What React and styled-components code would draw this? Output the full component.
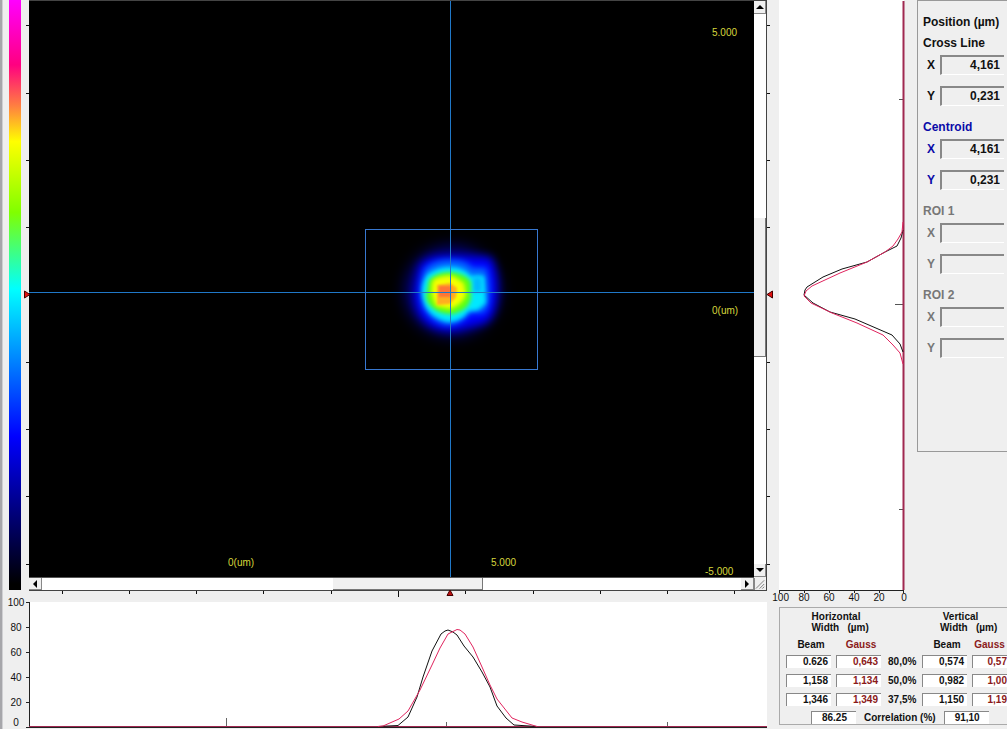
import styled, { createGlobalStyle } from "styled-components";

const GlobalStyle = createGlobalStyle`
    * {
        box-sizing: border-box;
    }

    body {
        margin: 0;
        background: #efefef;
        color: #111;
        font-family: "Liberation Sans", Arial, sans-serif;
        overflow: hidden;
    }
`;

const Page = styled.main`
    display: grid;
    grid-template-columns: minmax(0, 1fr) 228px;
    height: 100vh;
    min-height: 640px;
    border-left: 2px solid #a6a6aa;
`;

const Left = styled.div`
    display: flex;
    flex-direction: column;
    min-width: 0;
    border-left: 1px solid #cfcfd2;
    padding-bottom: 2px;
`;

const Viewer = styled.section`
    display: flex;
    flex: 1;
    min-height: 0;
    padding-left: 6px;
`;

const ColorBar = styled.div`
    width: 12px;
    margin-bottom: 1px;
    background: linear-gradient(
        #ff00ff 0%,
        #ff0080 11%,
        #ff8040 18%,
        #ffff00 24%,
        #80ff00 36%,
        #00ffff 49%,
        #0000ff 74%,
        #000 99%
    );
`;

const SideRuler = styled.svg`
    flex: none;
    width: ${(props) => props.$width}px;
    height: 100%;
    position: relative;
    z-index: 1;
    overflow: visible;
`;

const BottomRuler = styled.svg`
    display: block;
    height: 11px;
    margin: 0 12px 0 26px;
    overflow: visible;
    position: relative;
    z-index: 1;
`;

const Frame = styled.div`
    flex: 1;
    min-width: 0;
    display: grid;
    grid-template-columns: minmax(0, 1fr) 12px;
    grid-template-rows: minmax(0, 1fr) 13px;
    border: solid #444;
    border-width: 1px 1px 1px 0;
`;

const Canvas = styled.svg`
    display: block;
    width: 100%;
    height: 100%;
    background: #000;
`;

const CanvasText = styled.text`
    fill: #d6d63c;
    font-size: 10px;
`;

const ScrollBar = styled.div`
    display: flex;
    flex-direction: ${(props) => (props.$vertical ? "column" : "row")};
    border-top: ${(props) => (props.$vertical ? "none" : "1px solid #555")};
    background: #fff;
`;

const ScrollButton = styled.button`
    display: flex;
    align-items: center;
    justify-content: center;
    flex: none;
    width: ${(props) => (props.$vertical ? 12 : 13)}px;
    height: ${(props) => (props.$vertical ? 13 : 12)}px;
    padding: 0;
    border: solid #888;
    border-width: 0 1px 1px 0;
    background: #f0f0f0;
`;

const Track = styled.div`
    flex: 1;
    display: flex;
    flex-direction: inherit;
`;

const Thumb = styled.div`
    background: #f0f0f0;
    border: solid #777;
    border-width: 0 1px 1px 0;
`;

const Grip = styled.svg`
    width: 12px;
    height: 12px;
    margin-top: 1px;
    background: #f0f0f0;
    border-left: 1px solid #888;
`;

const Profile = styled.section`
    display: grid;
    grid-template-columns: 26px minmax(0, 1fr);
    height: 125px;
    margin-right: 12px;
`;

const YAxis = styled.div`
    display: grid;
    grid-template-rows: repeat(4, 25px) 20px 12px;
    margin: -5px 0 -2px;
    font-size: 10px;
    line-height: 12px;
    text-align: center;
`;

const Plot = styled.svg`
    display: block;
    width: 100%;
    height: 100%;
    min-height: 0;
    background: #fff;
    overflow: visible;
`;

const Curve = styled.polyline`
    fill: none;
    stroke: ${(props) => (props.$gauss ? "#e0245e" : "#111")};
    stroke-width: 1;
`;

const Right = styled.div`
    display: flex;
    flex-direction: column;
    min-width: 0;
    padding-bottom: 4px;
`;

const Upper = styled.div`
    flex: 1;
    min-height: 0;
    display: grid;
    grid-template-columns: 125px minmax(0, 1fr);
    grid-template-rows: minmax(0, 1fr);
    column-gap: 13px;
`;

const VerticalProfile = styled.section`
    display: flex;
    flex-direction: column;
    min-height: 0;
`;

const XAxis = styled.div`
    flex: none;
    display: flex;
    justify-content: space-between;
    height: 17px;
    margin: 0 -10px;
    padding-top: 2px;
    font-size: 10px;
    line-height: 12px;

    span {
        width: 20px;
        text-align: center;
    }

    span:first-child {
        text-align: right;
    }
`;

const Positions = styled.section`
    align-self: start;
    border: 1px solid #999;
    border-right: none;
    padding: 13px 3px 93px 5px;
    font-size: 12px;
    font-weight: bold;
    white-space: nowrap;
`;

const PositionTitle = styled.h2`
    margin: 0 0 5px;
    font-size: 12px;
    line-height: 16px;
`;

const Group = styled.fieldset`
    margin: 0 0 13px;
    padding: 0;
    border: none;
    color: ${(props) => props.$color};

    &:last-child {
        margin-bottom: 0;
    }
`;

const Legend = styled.legend`
    padding: 0 0 4px;
    line-height: 16px;
`;

const Coordinate = styled.label`
    display: grid;
    grid-template-columns: 17px minmax(0, 1fr);
    line-height: 20px;
    text-indent: 4px;

    & + & {
        margin-top: 11px;
    }
`;

const Field = styled.input`
    width: 100%;
    min-width: 0;
    height: 20px;
    margin: 0;
    padding: 0 4px 2px 0;
    border: solid;
    border-width: 2px 0 1px 2px;
    border-color: #888 #fff #fff #888;
    border-radius: 0;
    outline: none;
    background: #efefef;
    color: #111;
    font: inherit;
    text-align: right;
`;

const Results = styled.section`
    flex: none;
    height: 118px;
    border: 1px solid #aaa;
    border-right: none;
    padding: 3px 0 0 6px;
    font-size: 10px;
    font-weight: bold;
`;

const WidthTable = styled.table`
    width: 100%;
    table-layout: fixed;
    border-collapse: collapse;

    th,
    td {
        padding: 0;
    }

    tbody tr {
        height: 19px;
    }
`;

const GroupHead = styled.th`
    line-height: 11px;
    height: 26px;
    vertical-align: top;
    white-space: pre;

    &:last-child {
        text-indent: -8px;
    }
`;

const ColumnHead = styled.th`
    height: 15px;
    color: ${(props) => (props.$gauss ? "#8b1a1a" : "#111")};
`;

const Reading = styled.output`
    display: block;
    width: ${(props) => (props.$fill ? "100%" : "45px")};
    height: 13px;
    padding-right: ${(props) => (props.$fill ? 0 : props.$wide ? 9 : 3)}px;
    border: solid #888;
    border-width: 1px 0 0 1px;
    background: #fff;
    color: ${(props) => (props.$gauss ? "#8b1a1a" : "#111")};
    line-height: 12px;
    text-align: right;
`;

const Level = styled.th`
    font-size: 10px;
    text-align: left;
    text-indent: 2px;
`;

const Correlation = styled.div`
    display: flex;
    align-items: center;
    gap: 8px;
    margin-top: 2px;
    padding-left: 25px;
    white-space: nowrap;
`;

const leftTicks = [25, 93, 160, 227, 362, 429, 496, 564];
const bottomTicks = [33, 100, 167, 234, 302, 369, 436, 504, 571, 638, 705];

const groups = [
    { name: "Cross Line", color: "#111", x: "4,161", y: "0,231" },
    { name: "Centroid", color: "#0a0aa8", x: "4,161", y: "0,231" },
    { name: "ROI 1", color: "#777", x: "", y: "" },
    { name: "ROI 2", color: "#777", x: "", y: "" },
];

const widths = [
    { level: "80,0%", values: ["0.626", "0,643", "0,574", "0,57"] },
    { level: "50,0%", values: ["1,158", "1,134", "0,982", "1,00"] },
    { level: "37,5%", values: ["1,346", "1,349", "1,150", "1,19"] },
];

const arrows = {
    up: "0,6 4,2 8,6",
    down: "0,2 8,2 4,6",
    left: "6,0 6,8 2,4",
    right: "2,0 6,4 2,8",
};

const Arrow = ({ to }) => (
    <svg width="8" height="8" viewBox="0 0 8 8">
        <polygon points={arrows[to]} fill="#000" />
    </svg>
);

const Scroller = ({ vertical, start, size, label }) => (
    <ScrollBar $vertical={vertical}>
        <ScrollButton $vertical={vertical} aria-label={label + " back"}>
            <Arrow to={vertical ? "up" : "left"} />
        </ScrollButton>
        <Track>
            <div style={{ flexBasis: start + "%" }} />
            <Thumb style={{ flexBasis: size + "%" }} />
        </Track>
        <ScrollButton $vertical={vertical} aria-label={label + " forward"}>
            <Arrow to={vertical ? "down" : "right"} />
        </ScrollButton>
    </ScrollBar>
);

const BeamImage = () => (
    <Canvas viewBox="0 0 725 576" preserveAspectRatio="none" role="img" aria-label="Beam">
        <defs>
            {[1, 2, 3, 5, 8].map((n) => (
                <filter
                    key={n}
                    id={"soft" + n}
                    x="-50%"
                    y="-50%"
                    width="200%"
                    height="200%"
                    colorInterpolationFilters="sRGB"
                >
                    <feGaussianBlur stdDeviation={n} />
                </filter>
            ))}
        </defs>
        <ellipse cx="423" cy="290" rx="46" ry="44" fill="#00008c" filter="url(#soft8)" />
        <path
            d="M391 264 Q400 255 415 256 L462 256 Q469 270 468 290 Q467 316 456 322 L438 326 Q414 334 398 322 Q386 312 386 292 Z"
            fill="#0000ff"
            filter="url(#soft5)"
        />
        <path
            d="M396 268 Q404 259 421 259 Q438 259 443 267 L457 267 Q461 280 460 296 Q459 311 453 312 L441 312 Q431 325 417 324 Q402 321 394 306 Q388 285 396 268 Z"
            fill="#0070ff"
            filter="url(#soft3)"
        />
        <path
            d="M398 274 Q408 266 420 266 Q435 266 442 275 L455 275 L457 302 L449 309 L440 310 Q432 321 419 321 Q405 318 398 308 Q388 290 398 274 Z"
            fill="#00e8ff"
            filter="url(#soft2)"
        />
        <rect x="444" y="276" width="9" height="15" fill="#00b8ff" filter="url(#soft2)" />
        <path
            d="M400 279 Q408 271 421 271 Q437 272 442 281 L442 298 Q439 308 430 311 Q420 316 408 310 Q398 304 397 296 Z"
            fill="#5dff10"
            filter="url(#soft2)"
        />
        <path
            d="M404 279 Q414 274 424 275 L435 282 L437 294 Q433 304 421 308 L407 305 Q400 291 404 279 Z"
            fill="#f4ff00"
            filter="url(#soft2)"
        />
        <path
            d="M408 284 L421 282 L428 287 L427 296 L421 303 L408 304 Z"
            fill="#ffae20"
            filter="url(#soft1)"
        />
        <rect x="410" y="285" width="12" height="11" fill="#ff7438" filter="url(#soft1)" />
        <g fill="none" stroke="#2078c8" shapeRendering="crispEdges">
            <path d="M0 291.5H725" />
            <path d="M421.5 0V576" />
            <rect x="336.5" y="228.5" width="172" height="140" stroke="#3878d0" />
        </g>
        <CanvasText x="683" y="35">5.000</CanvasText>
        <CanvasText x="683" y="313">0(um)</CanvasText>
        <CanvasText x="676" y="574">-5.000</CanvasText>
        <CanvasText x="199" y="565">0(um)</CanvasText>
        <CanvasText x="462" y="565">5.000</CanvasText>
    </Canvas>
);

const HorizontalProfile = () => (
    <Profile>
        <YAxis>
            {[100, 80, 60, 40, 20, 0].map((n) => (
                <span key={n}>{n}</span>
            ))}
        </YAxis>
        <Plot viewBox="0 0 738 125" preserveAspectRatio="none">
            <g stroke="#222" shapeRendering="crispEdges">
                <path d="M0.5 0V125" />
                <path d="M-3 0.5H0M-3 25.5H0M-3 50.5H0M-3 75.5H0M-3 100.5H0M-3 125.5H738" />
                <path d="M197.5 116V125M417.5 120V125M638.5 120V125" stroke="#666" />
            </g>
            <path d="M0 124.5H738" stroke="#a02850" shapeRendering="crispEdges" />
            <Curve points="349,124.5 369,123.5 379,115 388,95 394,75 403,49 412,32 416,29 419,28 424,30 428,33 435,44 444,55 453,70 461,85 468,104 477,116 485,123 508,124.5" />
            <Curve
                $gauss
                points="349,124.5 354,124 370,117 379,109 391,88 403,63 411,46 419,32 428,27.5 431,28 436,32 444,45 453,65 461,83 468,97 483,116 493,120 508,124.5"
            />
        </Plot>
    </Profile>
);

const App = () => {
    return (
        <>
            <GlobalStyle />
            <Page>
                <Left>
                    <Viewer>
                        <ColorBar />
                        <SideRuler $width={8} viewBox="0 0 8 591" preserveAspectRatio="none">
                            {leftTicks.map((y) => (
                                <path key={y} d={`M5 ${y + 0.5}H8`} stroke="#111" />
                            ))}
                            <polygon points="3.5,291 3.5,298 9,294.5" fill="#e01010" stroke="#400" />
                        </SideRuler>
                        <Frame>
                            <BeamImage />
                            <Scroller vertical label="Vertical" start={37} size={25.3} />
                            <Scroller label="Horizontal" start={41.7} size={21.4} />
                            <Grip viewBox="0 0 12 12">
                                <path d="M1 11L10 2M5 11L10 6M8 11L10 9" stroke="#777" />
                            </Grip>
                        </Frame>
                        <SideRuler $width={12} viewBox="0 0 12 591" preserveAspectRatio="none">
                            {leftTicks.map((y) => (
                                <path key={y} d={`M0 ${y + 0.5}H3`} stroke="#111" />
                            ))}
                            <polygon points="5.5,291 5.5,298 0,294.5" fill="#e01010" stroke="#400" />
                        </SideRuler>
                    </Viewer>
                    <BottomRuler viewBox="0 0 738 11" preserveAspectRatio="none">
                        {bottomTicks.map((x) => (
                            <path key={x} d={`M${x + 0.5} 0V${x === 369 ? 6 : 3}`} stroke="#111" />
                        ))}
                        <polygon points="418,4.5 424,4.5 421,-1" fill="#c01010" stroke="#400" />
                    </BottomRuler>
                    <HorizontalProfile />
                </Left>
                <Right>
                    <Upper>
                        <VerticalProfile>
                            <Plot viewBox="0 0 125 590" preserveAspectRatio="none">
                                <g stroke="#222" shapeRendering="crispEdges">
                                    <path d="M120 99.5H125M120 509.5H125M116 304.5H125" stroke="#555" />
                                    <path d="M0 590.5H125M0.5 590V593M25.5 590V593M50.5 590V593M75.5 590V593M100.5 590V593M124.5 590V593" />
                                </g>
                                <path d="M124.5 1V590" stroke="#a02850" strokeWidth="2" />
                                <Curve points="124,230 122,238 118,246 106,252 88,262 63,269 44,277 28,287 26,290 25,295 34,303 51,312 76,319 113,335 121,344 124,352" />
                                <Curve
                                    $gauss
                                    points="124,222 123,232 119,239 114,246 106,252 88,262 61,273 33,286 27,291 25,296 32,303 53,313 78,323 104,335 114,345 121,353 124,364"
                                />
                            </Plot>
                            <XAxis>
                                {[100, 80, 60, 40, 20, 0].map((n) => (
                                    <span key={n}>{n}</span>
                                ))}
                            </XAxis>
                        </VerticalProfile>
                        <Positions>
                            <PositionTitle>Position (µm)</PositionTitle>
                            {groups.map((g) => (
                                <Group key={g.name} $color={g.color}>
                                    <Legend>{g.name}</Legend>
                                    <Coordinate>
                                        X
                                        <Field readOnly value={g.x} />
                                    </Coordinate>
                                    <Coordinate>
                                        Y
                                        <Field readOnly value={g.y} />
                                    </Coordinate>
                                </Group>
                            ))}
                        </Positions>
                    </Upper>
                    <Results>
                        <WidthTable>
                            <colgroup>
                                <col width="50" />
                                <col width="50" />
                                <col width="36" />
                                <col width="50" />
                                <col />
                            </colgroup>
                            <thead>
                                <tr>
                                    <GroupHead colSpan={2}>{"Horizontal\n   Width   (µm)"}</GroupHead>
                                    <td />
                                    <GroupHead colSpan={2}>{"Vertical\n   Width   (µm)"}</GroupHead>
                                </tr>
                                <tr>
                                    <ColumnHead>Beam</ColumnHead>
                                    <ColumnHead $gauss>Gauss</ColumnHead>
                                    <td />
                                    <ColumnHead>Beam</ColumnHead>
                                    <ColumnHead $gauss>Gauss</ColumnHead>
                                </tr>
                            </thead>
                            <tbody>
                                {widths.map(({ level, values }) => (
                                    <tr key={level}>
                                        <td><Reading>{values[0]}</Reading></td>
                                        <td><Reading $gauss>{values[1]}</Reading></td>
                                        <Level scope="row">{level}</Level>
                                        <td><Reading>{values[2]}</Reading></td>
                                        <td><Reading $gauss $fill>{values[3]}</Reading></td>
                                    </tr>
                                ))}
                            </tbody>
                        </WidthTable>
                        <Correlation>
                            <Reading $wide>86.25</Reading>
                            <span>Correlation (%)</span>
                            <Reading $wide>91,10</Reading>
                        </Correlation>
                    </Results>
                </Right>
            </Page>
        </>
    );
};

export default App;
